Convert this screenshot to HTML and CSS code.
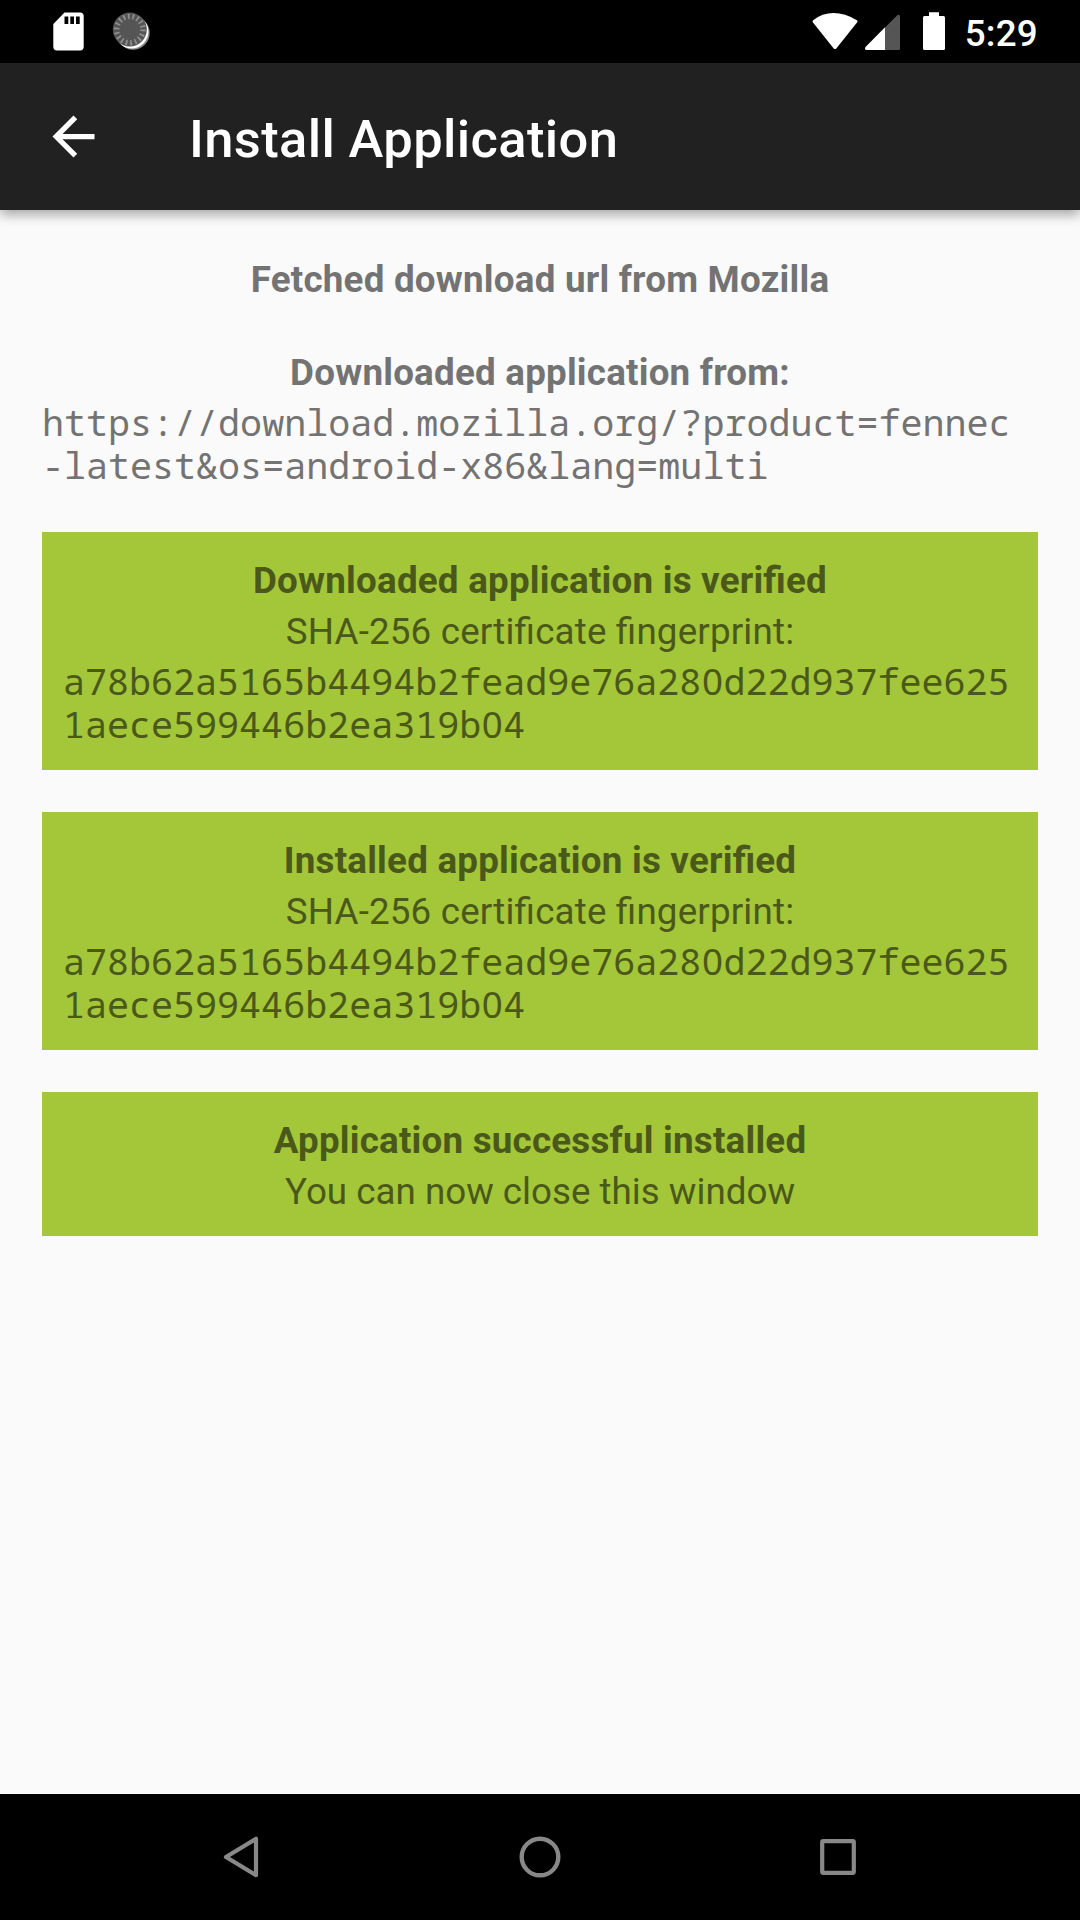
FILE: index.html
```html
<!DOCTYPE html>
<html lang="en">
<head>
<meta charset="utf-8">
<title>Install Application</title>
<link rel="stylesheet" href="styles.css">
</head>
<body>
<div class="screen">
  <div class="status-bar">
    <svg class="status-left" width="180" height="63" viewBox="0 0 180 63">
      <path fill="#fff" fill-rule="evenodd" d="M64.5 12.5H80a3.7 3.7 0 0 1 3.7 3.7V46.7a3.7 3.7 0 0 1-3.7 3.7H57a3.7 3.7 0 0 1-3.7-3.7V24ZM64.5 16.5V24H68.3V16.5ZM70.3 16.5V24H74V16.5ZM76 16.5V24H79.7V16.5Z"/>
      <circle cx="133" cy="33" r="16.7" fill="#888"/>
      <circle cx="131.7" cy="31.7" r="16.7" fill="#fff"/>
      <circle cx="129.8" cy="29.6" r="17" fill="#555"/>
      <circle cx="129.8" cy="29.6" r="13.2" fill="none" stroke="#909090" stroke-width="5.5" stroke-dasharray="1.7 2.908"/>
    </svg>
    <div class="status-right">
      <svg width="145" height="63" viewBox="805 0 145 63">
        <path fill="#fff" d="M812.8 20.4Q832 5.8 857.3 20.4Q857.8 21.5 857 22.6L836.5 48.2Q835 50 833.5 48.2L813 22.6Q812.2 21.5 812.8 20.4Z"/>
        <path fill="#555" d="M885 27.5 897.3 15.2Q900 13.8 900 17V48.5Q900 50 898.5 50H885Z"/>
        <path fill="#fff" d="M885 27.2V50H866.5Q864 49.5 865.5 47Z"/>
        <path fill="#fff" d="M929 12.2H939V16H943.5Q945 16 945 17.5V48.5Q945 50 943.5 50H924.5Q923 50 923 48.5V17.5Q923 16 924.5 16H929Z"/>
      </svg>
      <span class="clock">5:29</span>
    </div>
  </div>
  <header class="app-bar">
    <svg class="back" viewBox="0 0 24 24"><path fill="#fff" d="M20 11H7.83l5.59-5.59L12 4l-8 8 8 8 1.41-1.41L7.83 13H20v-2z"/></svg>
    <h1 class="title">Install Application</h1>
  </header>
  <main class="content">
    <section class="step"><h2>Fetched download url from Mozilla</h2></section>
    <section class="step">
      <h2>Downloaded application from:</h2>
      <p class="mono">https://download.mozilla.org/?product=fennec<br>-latest&amp;os=android-x86&amp;lang=multi</p>
    </section>
    <section class="card">
      <h2>Downloaded application is verified</h2>
      <p class="label">SHA-256 certificate fingerprint:</p>
      <p class="mono">a78b62a5165b4494b2fead9e76a28<span class="zero">0</span>d22d937fee625<br>1aece599446b2ea319b<span class="zero">0</span>4</p>
    </section>
    <section class="card">
      <h2>Installed application is verified</h2>
      <p class="label">SHA-256 certificate fingerprint:</p>
      <p class="mono">a78b62a5165b4494b2fead9e76a28<span class="zero">0</span>d22d937fee625<br>1aece599446b2ea319b<span class="zero">0</span>4</p>
    </section>
    <section class="card">
      <h2>Application successful installed</h2>
      <p>You can now close this window</p>
    </section>
  </main>
  <nav class="nav-bar">
    <svg width="60" height="60" viewBox="212 1827 60 60"><path d="M256 1838.8V1875.2L226 1857Z" fill="none" stroke="#888" stroke-width="4.2" stroke-linejoin="round"/></svg>
    <svg width="60" height="60" viewBox="510 1827 60 60"><circle cx="540" cy="1857" r="18.3" fill="none" stroke="#888" stroke-width="4.4"/></svg>
    <svg width="60" height="60" viewBox="808 1827 60 60"><rect x="822.2" y="1841.2" width="31.6" height="31.6" rx="1" fill="none" stroke="#888" stroke-width="4.2"/></svg>
  </nav>
</div>
</body>
</html>
```

FILE: styles.css
```css
* { box-sizing: border-box; }
body { margin: 0; font-family: Roboto, sans-serif; }
h1, h2, p { margin: 0; }
svg { display: block; flex: none; }

.screen {
  width: 1080px;
  height: 1920px;
  display: flex;
  flex-direction: column;
  background: #fafafa;
}

.status-bar {
  height: 63px;
  display: flex;
  justify-content: space-between;
  background: #000;
}
.status-right { display: flex; padding-right: 42px; }
.clock {
  width: 88px;
  text-align: right;
  color: #fff;
  font-size: 36.75px;
  font-weight: 500;
  letter-spacing: .25px;
  line-height: 67px;
}

.app-bar {
  height: 147px;
  display: flex;
  align-items: center;
  gap: 84px;
  padding-left: 42px;
  background: #212121;
  box-shadow: 0 5px 11px rgba(0, 0, 0, .33);
}
.back { width: 63px; height: 63px; }
.title {
  color: #fff;
  font-size: 52.5px;
  font-weight: 500;
  letter-spacing: .36px;
  line-height: 62px;
  padding-top: 4px;
}

.content {
  flex: 1;
  padding: 48px 42px 0;
  color: #737373;
  font-size: 36.75px;
  line-height: 43px;
  text-align: center;
}
/* letter-spacing turns ligatures off, so ask for them explicitly */
.content h2 {
  font-size: inherit;
  font-weight: 700;
  letter-spacing: .22px;
  font-feature-settings: "liga" 1;
}
.content p { margin-top: 8px; }
.content .label { letter-spacing: .17px; font-feature-settings: "liga" 1; }
.step + .step { margin-top: 50px; }
.card {
  margin-top: 42px;
  padding: 27px 21px 23px;
  background: #a4c639;
  color: #4a5919;
}
.step + .card { margin-top: 45px; }
.content .mono {
  margin: 7px 0 1px;
  font-family: "Droid Sans Mono", "Noto Sans Mono", "DejaVu Sans Mono", monospace;
  font-size: 36.7px;
  text-align: left;
  white-space: nowrap;
}
/* plain zero, one monospace cell wide */
.zero {
  display: inline-block;
  width: .6em;
  font-family: "Noto Sans", sans-serif;
  line-height: 1;
  text-align: center;
}

.nav-bar {
  height: 126px;
  display: flex;
  align-items: center;
  justify-content: center;
  gap: 238px;
  background: #000;
}
```
